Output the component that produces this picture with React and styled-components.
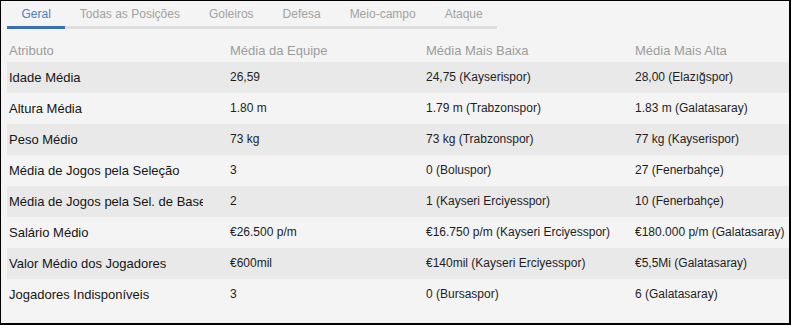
import React from "react";
import styled, { createGlobalStyle } from "styled-components";

const GlobalStyle = createGlobalStyle`
	html, body {
		margin: 0;
		padding: 0;
	}

	body {
		font-family: "Liberation Sans", Arial, sans-serif;
	}
`;

const tabs = ["Geral", "Todas as Posições", "Goleiros", "Defesa", "Meio-campo", "Ataque"];

const columns = ["Atributo", "Média da Equipe", "Média Mais Baixa", "Média Mais Alta"];

const rows = [
	["Idade Média", "26,59", "24,75 (Kayserispor)", "28,00 (Elazığspor)"],
	["Altura Média", "1.80 m", "1.79 m (Trabzonspor)", "1.83 m (Galatasaray)"],
	["Peso Médio", "73 kg", "73 kg (Trabzonspor)", "77 kg (Kayserispor)"],
	["Média de Jogos pela Seleção", "3", "0 (Boluspor)", "27 (Fenerbahçe)"],
	["Média de Jogos pela Sel. de Base", "2", "1 (Kayseri Erciyesspor)", "10 (Fenerbahçe)"],
	["Salário Médio", "€26.500 p/m", "€16.750 p/m (Kayseri Erciyesspor)", "€180.000 p/m (Galatasaray)"],
	["Valor Médio dos Jogadores", "€600mil", "€140mil (Kayseri Erciyesspor)", "€5,5Mi (Galatasaray)"],
	["Jogadores Indisponíveis", "3", "0 (Bursaspor)", "6 (Galatasaray)"],
];

function App() {
	return (
		<>
			<GlobalStyle />
			<Panel>
				<TabBar>
					{tabs.map((tab, i) => (
						<Tab key={tab} $active={i === 0}>
							{tab}
						</Tab>
					))}
				</TabBar>

				<HeaderRow>
					{columns.map((col) => (
						<HeaderCell key={col}>{col}</HeaderCell>
					))}
				</HeaderRow>

				{rows.map((row, i) => (
					<Row key={row[0]} $striped={i % 2 === 0}>
						{row.map((cell, j) => (
							<Cell key={j} $label={j === 0}>
								{cell}
							</Cell>
						))}
					</Row>
				))}
			</Panel>
		</>
	);
}

export default App;

const Panel = styled.div`
	box-sizing: border-box;
	width: 791px;
	height: 325px;
	background: #f4f4f4;
	border: 1px solid #000;
	border-right-width: 2px;
	border-bottom-width: 2px;
	padding: 0 0 0 6px;
	display: flex;
	flex-direction: column;
	align-items: flex-start;
	overflow: hidden;
`;

const TabBar = styled.div`
	display: flex;
	border-bottom: 3px solid #dedede;
`;

const Tab = styled.div`
	position: relative;
	font-size: 12px;
	line-height: 15px;
	padding: 6px 14.5px 4px;
	color: ${(p) => (p.$active ? "#4a7ec6" : "#a2a2a2")};

	/* active underline sits on top of the grey bar */
	&::after {
		content: "";
		display: ${(p) => (p.$active ? "block" : "none")};
		position: absolute;
		left: 0;
		right: 0;
		bottom: -3px;
		height: 3px;
		background: #3a6fbc;
	}
`;

const grid = `
	display: grid;
	grid-template-columns: 196px 171px 184px 1fr;
	column-gap: 25px;
	align-self: stretch;
`;

const HeaderRow = styled.div`
	${grid}
	height: 33px;
	align-items: end;
	padding-bottom: 4px;
	box-sizing: border-box;
`;

const HeaderCell = styled.div`
	font-size: 13px;
	line-height: 15px;
	color: #9c9c9c;
	padding-left: 2px;
	white-space: nowrap;
`;

const Row = styled.div`
	${grid}
	height: 31px;
	align-items: center;
	background: ${(p) => (p.$striped ? "#e9e9e9" : "transparent")};
`;

// the attribute column clips long labels, the value columns may run into the gap
const Cell = styled.div`
	font-size: ${(p) => (p.$label ? "13px" : "12px")};
	line-height: 15px;
	color: ${(p) => (p.$label ? "#151515" : "#1e1e1e")};
	padding-left: 2px;
	white-space: nowrap;
	overflow: ${(p) => (p.$label ? "hidden" : "visible")};
`;
